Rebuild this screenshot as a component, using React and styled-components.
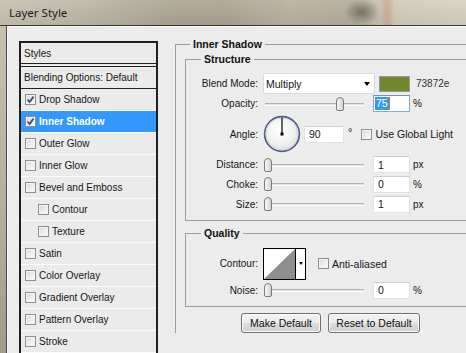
import React from "react";
import styled, { createGlobalStyle } from "styled-components";

const GlobalStyle = createGlobalStyle`
  html, body {
    margin: 0;
    padding: 0;
    background: #ececec;
  }
  body {
    font-family: "Liberation Sans", Arial, sans-serif;
    font-size: 10px;
    color: #161616;
  }
  * {
    box-sizing: border-box;
  }
`;

const styleItems = [
    { label: "Drop Shadow", checked: true },
    { label: "Inner Shadow", checked: true, active: true },
    { label: "Outer Glow" },
    { label: "Inner Glow" },
    { label: "Bevel and Emboss" },
    { label: "Contour", sub: true },
    { label: "Texture", sub: true },
    { label: "Satin" },
    { label: "Color Overlay" },
    { label: "Gradient Overlay" },
    { label: "Pattern Overlay" },
    { label: "Stroke" },
];

const CheckBox = ({ checked }) => (
    <Check>
        {checked && (
            <svg width="9" height="9" viewBox="0 0 9 9">
                <path d="M1.5 4.5 L3.6 7 L7.5 1.6" fill="none" stroke="#3d4b7c" strokeWidth="1.8" />
            </svg>
        )}
    </Check>
);

const SliderControl = ({ pos }) => (
    <Slider>
        <Track />
        <Thumb $pos={pos} />
    </Slider>
);

const AngleDial = () => (
    <svg width="38" height="38" viewBox="0 0 38 38">
        <defs>
            <radialGradient id="dialFill" cx="45%" cy="40%" r="65%">
                <stop offset="0%" stopColor="#ffffff" />
                <stop offset="60%" stopColor="#f1f1f1" />
                <stop offset="100%" stopColor="#d6d8dc" />
            </radialGradient>
        </defs>
        <circle cx="19" cy="19" r="17.4" fill="url(#dialFill)" stroke="#4e5c80" strokeWidth="1.6" />
        <circle cx="19" cy="19" r="16" fill="none" stroke="#c9cfdc" strokeWidth="0.8" />
        <line x1="19" y1="19" x2="19" y2="2.5" stroke="#000" strokeWidth="1.2" />
        <rect x="17.5" y="17.5" width="3" height="3" fill="#000" />
    </svg>
);

const App = () => {
    return (
        <>
            <GlobalStyle />
            <Window>
                <TitleBar>Layer Style</TitleBar>
                <Frame>
                    <SideStrip />
                    <Body>
                        <StylesPanel>
                            <PanelHeader>Styles</PanelHeader>
                            <BlendingRow>Blending Options: Default</BlendingRow>
                            {styleItems.map((item) => (
                                <StyleRow key={item.label} $active={item.active} $sub={item.sub}>
                                    <CheckBox checked={item.checked} />
                                    <span>{item.label}</span>
                                </StyleRow>
                            ))}
                        </StylesPanel>

                        <RightColumn>
                            <Group $pad="2px 0 0 9px">
                                <Legend $indent={5}>Inner Shadow</Legend>

                                <Group $closed $pad="7px 0 6px 0">
                                    <Legend $indent={15}>Structure</Legend>
                                    <FieldRow $h={21}>
                                        <Label>Blend Mode:</Label>
                                        <Select>
                                            <span>Multiply</span>
                                            <Arrow />
                                        </Select>
                                        <Swatch $color="#73872e" />
                                        <HexText>73872e</HexText>
                                    </FieldRow>
                                    <FieldRow $h={19}>
                                        <Label>Opacity:</Label>
                                        <SliderControl pos={73} />
                                        <NumBox $focused>
                                            <Selected>75</Selected>
                                            <Caret />
                                        </NumBox>
                                        <Unit>%</Unit>
                                    </FieldRow>
                                    <FieldRow $h={42}>
                                        <Label>Angle:</Label>
                                        <AngleDial />
                                        <NumBox $w={40} $ml={3}>90</NumBox>
                                        <Degree>°</Degree>
                                        <CheckSpacer $ml={9}>
                                            <CheckBox />
                                        </CheckSpacer>
                                        <CheckLabel>Use Global Light</CheckLabel>
                                    </FieldRow>
                                    <FieldRow $h={19}>
                                        <Label>Distance:</Label>
                                        <SliderControl pos={1} />
                                        <NumBox>1</NumBox>
                                        <Unit>px</Unit>
                                    </FieldRow>
                                    <FieldRow $h={20}>
                                        <Label>Choke:</Label>
                                        <SliderControl pos={1} />
                                        <NumBox>0</NumBox>
                                        <Unit>%</Unit>
                                    </FieldRow>
                                    <FieldRow $h={20}>
                                        <Label>Size:</Label>
                                        <SliderControl pos={1} />
                                        <NumBox>1</NumBox>
                                        <Unit>px</Unit>
                                    </FieldRow>
                                </Group>

                                <Group $closed $top={6} $pad="7px 0 6px 0">
                                    <Legend $indent={15}>Quality</Legend>
                                    <FieldRow $h={33}>
                                        <Label>Contour:</Label>
                                        <ContourPicker>
                                            <svg width="31" height="30" viewBox="0 0 31 30">
                                                <rect width="31" height="30" fill="#fff" />
                                                <polygon points="0,30 31,0 31,30" fill="#8e8e8e" />
                                            </svg>
                                            <PickerButton>
                                                <Arrow $small />
                                            </PickerButton>
                                        </ContourPicker>
                                        <CheckSpacer $ml={12}>
                                            <CheckBox />
                                        </CheckSpacer>
                                        <CheckLabel>Anti-aliased</CheckLabel>
                                    </FieldRow>
                                    <FieldRow $h={20}>
                                        <Label>Noise:</Label>
                                        <SliderControl pos={1} />
                                        <NumBox>0</NumBox>
                                        <Unit>%</Unit>
                                    </FieldRow>
                                </Group>

                                <ButtonRow>
                                    <DialogButton $w={80}>Make Default</DialogButton>
                                    <DialogButton $w={92}>Reset to Default</DialogButton>
                                </ButtonRow>
                            </Group>
                        </RightColumn>
                    </Body>
                </Frame>
            </Window>
        </>
    );
};

export default App;

const Window = styled.div`
    width: 466px;
    height: 353px;
    overflow: hidden;
    display: flex;
    flex-direction: column;
`;

const TitleBar = styled.div`
    height: 26px;
    flex: none;
    display: flex;
    align-items: center;
    padding: 0 0 1px 9px;
    border-bottom: 1px solid #3b392f;
    font-family: "Noto Sans", "Open Sans", sans-serif;
    font-size: 11.5px;
    color: #1c1c1c;
    background:
        radial-gradient(ellipse 18px 13px at 362px 12px, rgba(78, 72, 60, 0.6), rgba(78, 72, 60, 0)),
        linear-gradient(90deg, transparent 380px, rgba(190, 132, 116, 0.35) 386px, rgba(190, 132, 116, 0.35) 389px, transparent 395px),
        linear-gradient(180deg, rgba(255, 255, 255, 0.1), rgba(0, 0, 0, 0.04)),
        linear-gradient(90deg, #c4bfae 0%, #bcb6a3 18%, #aba490 36%, #a9a28e 48%, #b7b09c 62%, #b2ab97 76%, #d0cab6 84%, #d6d0bd 100%);
`;

const Frame = styled.div`
    flex: 1;
    display: flex;
    min-height: 0;
`;

const SideStrip = styled.div`
    width: 6px;
    flex: none;
    background: linear-gradient(180deg, #c6c0ad, #b3ad99 60%, #a29b87);
`;

const Body = styled.div`
    flex: 1;
    display: flex;
    align-items: flex-start;
    gap: 17px;
    padding: 15px 0 0 12px;
    background: #ececec;
    border-left: 1px solid #4d4b42;
    box-shadow: inset 0 1px 0 #f7f7f7, inset 1px 0 0 #f7f7f7;
    overflow: hidden;
`;

const StylesPanel = styled.div`
    width: 139px;
    flex: none;
    border: 2px solid #1f1f1f;
    border-bottom: none;
    background: #ebebeb;
`;

const PanelHeader = styled.div`
    height: 21px;
    display: flex;
    align-items: center;
    padding-left: 3px;
    border-bottom: 1px solid #222;
    margin-bottom: 2px;
`;

const BlendingRow = styled.div`
    height: 23px;
    display: flex;
    align-items: center;
    padding-left: 3px;
    border-top: 1px solid #222;
    border-bottom: 1px solid #222;
`;

const StyleRow = styled.div`
    height: 22px;
    display: flex;
    align-items: center;
    gap: 3px;
    padding-left: ${(p) => (p.$sub ? 17 : 4)}px;
    border-bottom: 1px solid #fbfbfb;
    background: ${(p) => (p.$active ? "#3399ff" : "transparent")};
    color: ${(p) => (p.$active ? "#fff" : "#161616")};
    font-weight: ${(p) => (p.$active ? "bold" : "normal")};
`;

const Check = styled.span`
    width: 11px;
    height: 11px;
    flex: none;
    display: flex;
    align-items: center;
    justify-content: center;
    border: 1px solid #8e8f8f;
    background: linear-gradient(135deg, #d2d5da 0%, #eeeeee 55%, #fbfbfb 100%);
    box-shadow: inset 0 0 0 1px #f4f4f4;
`;

const RightColumn = styled.div`
    width: 300px;
    flex: none;
    margin-top: -3px;
`;

const Group = styled.fieldset`
    margin: ${(p) => p.$top || 0}px 0 0 0;
    min-width: 0;
    padding: ${(p) => p.$pad};
    border: 0;
    border-top: 1px solid #9d9d9d;
    border-left: 1px solid #9d9d9d;
    border-bottom: ${(p) => (p.$closed ? "1px solid #9d9d9d" : "0")};
`;

const Legend = styled.legend`
    margin-left: ${(p) => p.$indent}px;
    padding: 0 3px;
    font-size: 10.5px;
    font-weight: bold;
    line-height: 13px;
    color: #111;
`;

const FieldRow = styled.div`
    height: ${(p) => p.$h}px;
    display: flex;
    align-items: center;
`;

const Label = styled.span`
    width: 72px;
    flex: none;
    margin-right: 5px;
    text-align: right;
`;

const Select = styled.div`
    width: 112px;
    height: 21px;
    flex: none;
    display: flex;
    align-items: center;
    justify-content: space-between;
    padding: 0 4px 0 2px;
    background: #fff;
    border: 1px solid #dadada;
    border-radius: 2px;
    font-size: 10.5px;
`;

const Arrow = styled.span`
    width: 0;
    height: 0;
    border-left: ${(p) => (p.$small ? 2.5 : 3.5)}px solid transparent;
    border-right: ${(p) => (p.$small ? 2.5 : 3.5)}px solid transparent;
    border-top: ${(p) => (p.$small ? 3 : 4)}px solid #000;
`;

const Swatch = styled.span`
    width: 31px;
    height: 16px;
    flex: none;
    margin-left: 4px;
    background: ${(p) => p.$color};
    border: 1px solid #9a9a9a;
`;

const HexText = styled.span`
    margin-left: 6px;
    color: #333;
`;

const Slider = styled.div`
    position: relative;
    width: 101px;
    height: 14px;
    flex: none;
`;

const Track = styled.div`
    position: absolute;
    left: 2px;
    right: 0;
    top: 6px;
    height: 3px;
    border-top: 1px solid #b3b3b3;
    border-bottom: 1px solid #fdfdfd;
    background: #e1e1e1;
`;

const Thumb = styled.div`
    position: absolute;
    top: 0;
    left: ${(p) => p.$pos}px;
    width: 8px;
    height: 14px;
    border: 1px solid #7b7b7b;
    border-radius: 4px 4px 2px 2px;
    background: linear-gradient(90deg, #f8f8f8, #dedede 70%, #cfcfcf);
`;

const NumBox = styled.div`
    width: ${(p) => p.$w || 37}px;
    height: 17px;
    flex: none;
    margin-left: ${(p) => (p.$ml !== undefined ? p.$ml : 9)}px;
    display: flex;
    align-items: center;
    padding-left: 4px;
    background: #fff;
    border: 1px solid ${(p) => (p.$focused ? "#86a8d6" : "#e2e2e2")};
    border-top-color: ${(p) => (p.$focused ? "#6f93c8" : "#cfcfcf")};
    font-size: 10.5px;
`;

const Selected = styled.span`
    background: #3399ff;
    color: #fff;
    padding: 0 1px;
    line-height: 13px;
    margin-left: -3px;
`;

const Caret = styled.span`
    width: 1px;
    height: 13px;
    background: #e0702a;
`;

const Unit = styled.span`
    margin-left: 3px;
`;

const Degree = styled.span`
    margin-left: 4px;
    align-self: flex-start;
    margin-top: 13px;
    font-size: 11px;
`;

const CheckSpacer = styled.span`
    margin-left: ${(p) => p.$ml}px;
    display: flex;
`;

const CheckLabel = styled.span`
    margin-left: 3px;
    font-size: 10.5px;
`;

const ContourPicker = styled.div`
    width: 43px;
    height: 32px;
    flex: none;
    display: flex;
    border: 1px solid #000;
    box-shadow: inset 1px 1px 0 #000;
    background: #fff;
`;

const PickerButton = styled.div`
    flex: 1;
    display: flex;
    align-items: center;
    justify-content: center;
    border-left: 1px solid #000;
    background: #fff;
`;

const ButtonRow = styled.div`
    display: flex;
    gap: 7px;
    margin: 6px 0 0 56px;
`;

const DialogButton = styled.button`
    width: ${(p) => p.$w}px;
    height: 20px;
    padding: 0;
    border: 1px solid #707070;
    border-radius: 3px;
    background: linear-gradient(180deg, #f3f3f3 0%, #ebebeb 48%, #dddddd 52%, #cfcfcf 100%);
    box-shadow: inset 0 0 0 1px #fbfbfb;
    font-family: "Liberation Sans", Arial, sans-serif;
    font-size: 10.5px;
    color: #111;
`;
